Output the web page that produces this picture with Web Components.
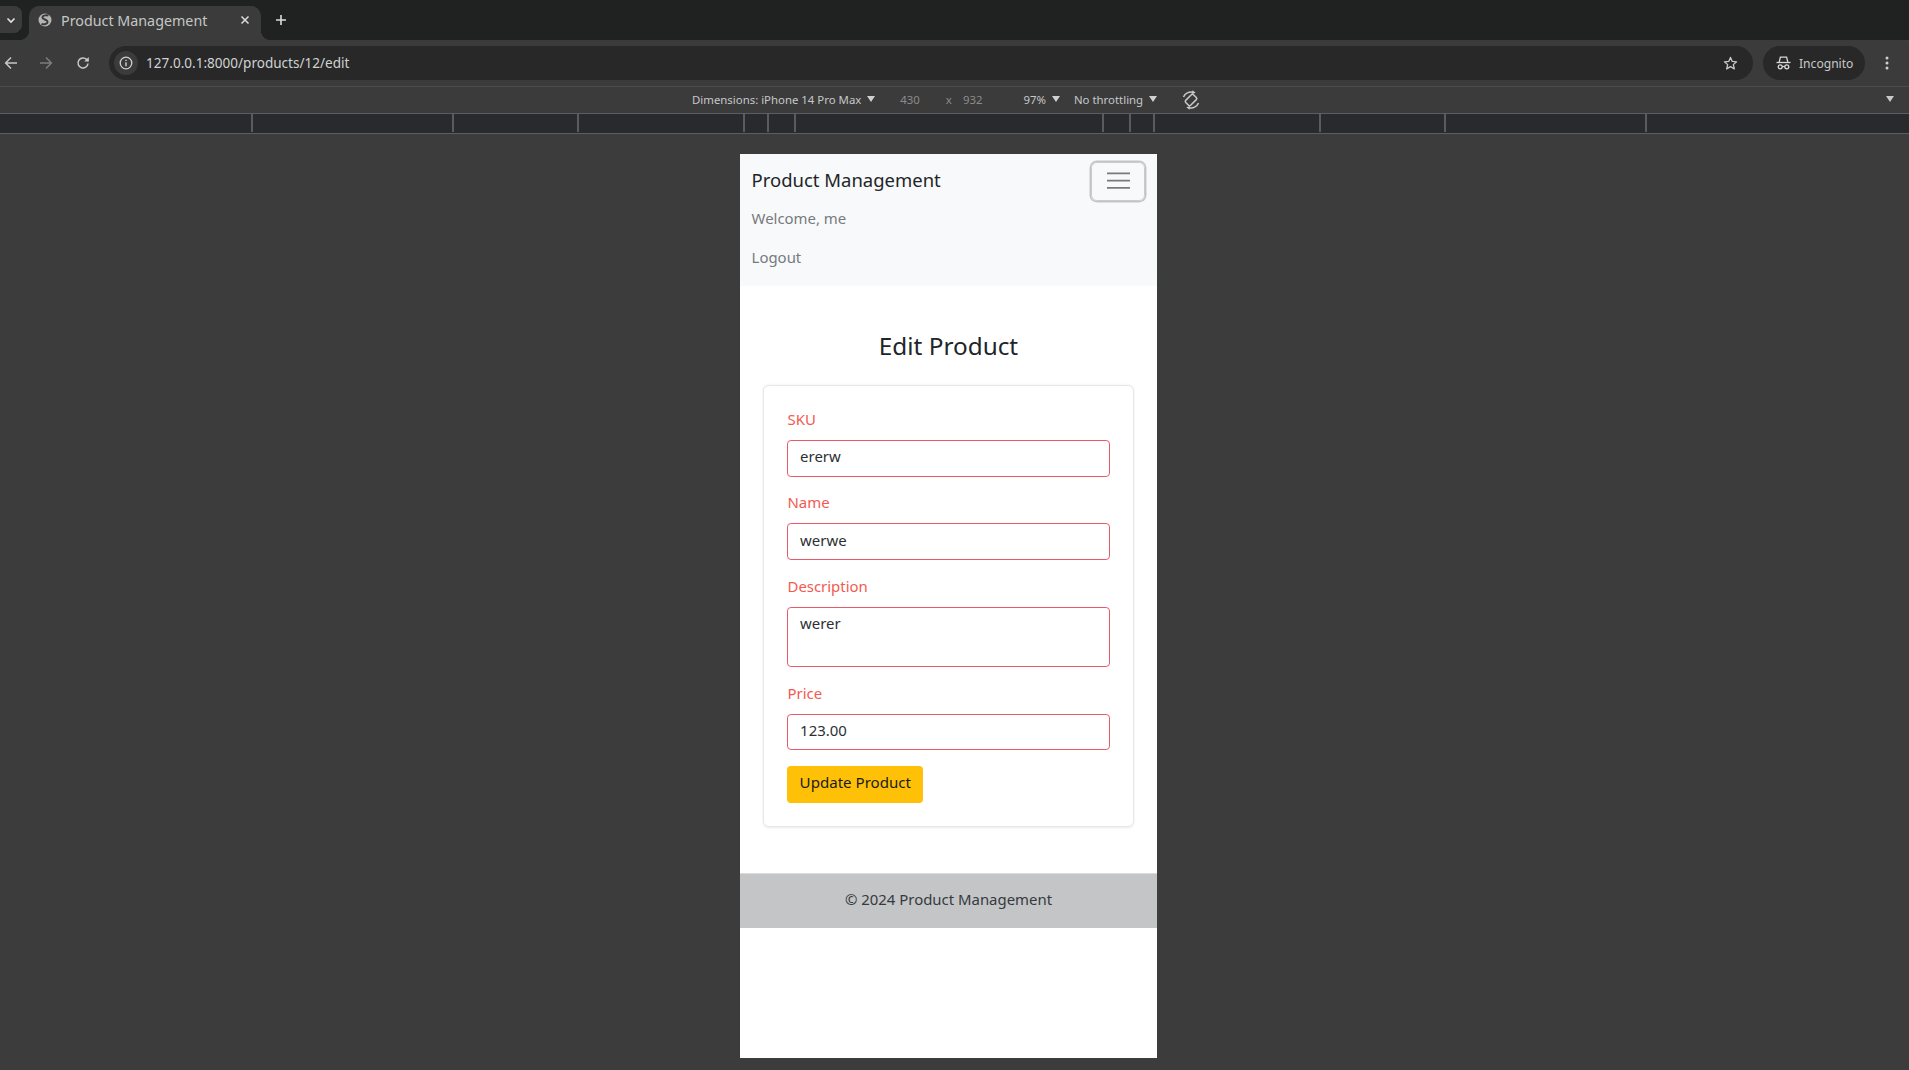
<!DOCTYPE html>
<html lang="en">
<head>
<meta charset="utf-8">
<title>Product Management</title>
<style>
  html, body { margin: 0; height: 100%; overflow: hidden; background: #3c3c3c; }
  body { font-family: "Noto Sans", "Open Sans", sans-serif; }
  :root { --ui-font: "Noto Sans", "Open Sans", sans-serif; }
</style>
</head>
<body>

<browser-window>
  <product-page>
    <app-navbar brand="Product Management">
      <span>Welcome, me</span>
      <span>Logout</span>
    </app-navbar>
    <edit-form title-text="Edit Product">
      <form-field label="SKU">ererw</form-field>
      <form-field label="Name">werwe</form-field>
      <form-field label="Description" multiline>werer</form-field>
      <form-field label="Price">123.00</form-field>
      <update-button>Update Product</update-button>
    </edit-form>
    <app-footer>© 2024 Product Management</app-footer>
  </product-page>
</browser-window>

<script>
// browser chrome
class TabStrip extends HTMLElement {
  constructor() {
    super();
    this.attachShadow({mode: 'open'}).innerHTML = `
      <style>
        :host { display: flex; height: 40px; background: #202222; align-items: flex-end; font-family: var(--ui-font); }
        .more { width: 22px; height: 27px; margin-bottom: 7px; background: #3b3b3b; border-radius: 0 8px 8px 0;
                display: flex; align-items: center; justify-content: center; }
        .tab { position: relative; width: 232px; height: 34px; margin-left: 7px; background: #3b3b3b; border-radius: 10px 10px 0 0;
               display: flex; align-items: center; box-sizing: border-box; padding: 0 11px 6px 9px; color: #c4c7c5; font-size: 14.3px; }
        .tab::before, .tab::after { content: ""; position: absolute; bottom: 0; width: 10px; height: 10px; }
        .tab::before { left: -10px; background: radial-gradient(circle at 0 0, #202222 10px, #3b3b3b 10.5px); }
        .tab::after { right: -10px; background: radial-gradient(circle at 100% 0, #202222 10px, #3b3b3b 10.5px); }
        .name { flex: 1; margin-left: 9px; white-space: nowrap; }
        .plus { margin: 0 0 7px 14px; height: 27px; display: flex; align-items: center; }
        svg { display: block; }
      </style>
      <div class="more"><svg width="12" height="12" viewBox="0 0 12 12"><path d="M2.5 4.5 6 8l3.5-3.5" fill="none" stroke="#e3e3e3" stroke-width="1.6"/></svg></div>
      <div class="tab">
        <svg width="14" height="14" viewBox="0 0 14 14"><circle cx="7" cy="7" r="6.5" fill="#b4b4b4"/><path d="M10.500 2.500C8.500 1.800 4.500 2.200 4.400 4.400 4.300 6.500 9.500 6.500 9.600 8.800 9.700 11 6 11.800 3.500 11" fill="none" stroke="#3b3b3b" stroke-width="2"/></svg>
        <span class="name">Product Management</span>
        <svg width="10" height="10" viewBox="0 0 10 10"><path d="M1.5 1.5l7 7m0-7l-7 7" stroke="#dcdcdc" stroke-width="1.5"/></svg>
      </div>
      <div class="plus"><svg width="12" height="12" viewBox="0 0 12 12"><path d="M6 1v10M1 6h10" stroke="#dcdcdc" stroke-width="1.6"/></svg></div>
    `;
  }
}

class AddressBar extends HTMLElement {
  constructor() {
    super();
    this.attachShadow({mode: 'open'}).innerHTML = `
      <style>
        :host { display: flex; align-items: center; height: 46px; background: #3b3b3b; border-radius: 0 10px 0 0; font-family: var(--ui-font); }
        .nav { display: flex; width: 109px; box-sizing: border-box; padding-left: 4px; gap: 21px; }
        .nav svg:nth-child(3) { margin-left: 2px; }
        .url { flex: 1; height: 34px; background: #282828; border-radius: 17px; display: flex; align-items: center; }
        .info { width: 24px; height: 24px; margin-left: 5px; background: #3b3b3b; border-radius: 50%; display: flex; align-items: center; justify-content: center; }
        .text { flex: 1; margin-left: 8px; color: #cfd2d3; font-size: 13.55px; white-space: nowrap; }
        .star { margin-right: 15px; }
        .pill { width: 102px; height: 34px; margin-left: 10px; background: #282828; border-radius: 17px; display: flex; align-items: center;
                box-sizing: border-box; padding-left: 13px; gap: 8px; color: #c8c8c8; font-size: 12.1px; }
        .menu { width: 44px; display: flex; justify-content: center; }
        svg { display: block; }
      </style>
      <div class="nav">
        <svg width="14" height="14" viewBox="0 0 14 14"><path d="M13 7H2M7 1.5 1.6 7 7 12.500" fill="none" stroke="#c8c8c8" stroke-width="1.500"/></svg>
        <svg width="14" height="14" viewBox="0 0 14 14"><path d="M1 7h11M7 1.500 12.400 7 7 12.500" fill="none" stroke="#7d7d7d" stroke-width="1.500"/></svg>
        <svg width="14" height="14" viewBox="0 0 14 14"><path d="M12 7.500A5 5 0 1 1 10.500 3.400L12.300 5" fill="none" stroke="#c8c8c8" stroke-width="1.500"/><path d="M12.800 1v4.600H8.200Z" fill="#c8c8c8"/></svg>
      </div>
      <div class="url">
        <div class="info"><svg width="14" height="14" viewBox="0 0 14 14"><circle cx="7" cy="7" r="5.800" fill="none" stroke="#d0d0d0" stroke-width="1.300"/><path d="M7 6.200v4M7 3.800v1.300" stroke="#d0d0d0" stroke-width="1.400"/></svg></div>
        <span class="text">127.0.0.1:8000/products/12/edit</span>
        <svg class="star" width="15" height="15" viewBox="0 0 16 16"><path d="M8 1.500l1.900 4.300 4.600.4-3.500 3 1.100 4.600L8 11.400l-4.100 2.400L5 9.200l-3.500-3 4.600-.4Z" fill="none" stroke="#c8c8c8" stroke-width="1.400" stroke-linejoin="round"/></svg>
      </div>
      <div class="pill">
        <svg width="15" height="14" viewBox="0 0 15 14"><path d="M0.500 6.500h14" stroke="#d8d8d8" stroke-width="1.300"/><path d="M3.200 6 4.400 1.200h6.200L11.800 6" fill="none" stroke="#d8d8d8" stroke-width="1.300"/><circle cx="4.200" cy="10.800" r="2" fill="none" stroke="#d8d8d8" stroke-width="1.300"/><circle cx="10.800" cy="10.800" r="2" fill="none" stroke="#d8d8d8" stroke-width="1.300"/><path d="M6.200 10.500h2.600" stroke="#d8d8d8" stroke-width="1.200"/></svg>
        <span>Incognito</span>
      </div>
      <div class="menu"><svg width="4" height="14" viewBox="0 0 4 14"><circle cx="2" cy="2" r="1.500" fill="#d0d0d0"/><circle cx="2" cy="7" r="1.500" fill="#d0d0d0"/><circle cx="2" cy="12" r="1.500" fill="#d0d0d0"/></svg></div>
    `;
  }
}

class DeviceBar extends HTMLElement {
  constructor() {
    super();
    const tri = (gap) => `<svg style="margin-left:${gap}px" width="8" height="6" viewBox="0 0 8 6"><path d="M0 0h8L4 6Z" fill="#d0d0d0"/></svg>`;
    this.attachShadow({mode: 'open'}).innerHTML = `
      <style>
        :host { display: flex; align-items: center; box-sizing: content-box; padding: 0 0 2px 692px; height: 24px; background: #3b3b3b;
                border-top: 1px solid #4b4b4b; font-family: var(--ui-font); font-size: 11.4px; color: #c6c8ca; white-space: nowrap; }
        .dim { color: #8b8b8b; }
        svg { display: block; flex: none; }
      </style>
      <span>Dimensions: iPhone 14 Pro Max</span>${tri(6)}
      <span class="dim" style="margin-left:25px">430</span>
      <span class="dim" style="margin-left:26px">x</span>
      <span class="dim" style="margin-left:11px">932</span>
      <span style="margin-left:41px">97%</span>${tri(6)}
      <span style="margin-left:14px">No throttling</span>${tri(6)}
      <svg style="margin-left:24px;position:relative;top:1px" width="20" height="20" viewBox="0 0 20 20"><g fill="none" stroke="#c8c8c8" stroke-width="1.500"><rect x="6.500" y="4.500" width="7" height="11" rx="1.500" transform="rotate(45 10 10)"/><path d="M2.500 7A8 8 0 0 1 12 2.300M17.500 13A8 8 0 0 1 8 17.700"/></g><path d="M11.500 .3l3.200 2.500-3.800 1.200ZM8.500 19.700l-3.200-2.500 3.800-1.200Z" fill="#c8c8c8"/></svg>
      <svg style="margin-left:auto;margin-right:15px" width="8" height="6" viewBox="0 0 8 6"><path d="M0 0h8L4 6Z" fill="#c8c8c8"/></svg>
    `;
  }
}

class DeviceRuler extends HTMLElement {
  constructor() {
    super();
    // segment widths of the media query bar, left to right
    const segs = [253, 201, 125, 166, 24, 27, 308, 27, 24, 166, 125, 201, 262];
    this.attachShadow({mode: 'open'}).innerHTML = `
      <style>
        :host { display: flex; height: 19px; background: #292a2d; border-top: 1px solid #5e5e5e; border-bottom: 1px solid #5e5e5e; }
        div { flex: none; box-sizing: border-box; border-right: 2px solid #5a5b5d; margin-bottom: 1px; }
        div:last-child { border: 0; flex: 1; }
      </style>
      ${segs.map(w => `<div style="width:${w}px"></div>`).join('')}
    `;
  }
}

class BrowserWindow extends HTMLElement {
  constructor() {
    super();
    this.attachShadow({mode: 'open'}).innerHTML = `
      <style>
        :host { display: flex; flex-direction: column; height: 100vh; background: #3c3c3c; }
        .stage { flex: 1; display: flex; justify-content: center; padding: 20px 12px 0 0; min-height: 0; }
      </style>
      <tab-strip></tab-strip>
      <address-bar></address-bar>
      <device-bar></device-bar>
      <device-ruler></device-ruler>
      <div class="stage"><slot></slot></div>
    `;
  }
}

// the emulated page, 430x932 at 97%
class ProductPage extends HTMLElement {
  constructor() {
    super();
    this.attachShadow({mode: 'open'}).innerHTML = `
      <style>
        :host { display: flex; flex-direction: column; flex: none; width: 430px; height: 932px; zoom: 0.97; background: #fff;
                font-family: var(--ui-font); font-size: 15.4px; line-height: 24px; color: #212529; }
      </style>
      <slot></slot>
    `;
  }
}

class AppNavbar extends HTMLElement {
  constructor() {
    super();
    const brand = this.getAttribute('brand');
    this.attachShadow({mode: 'open'}).innerHTML = `
      <style>
        :host { display: block; background: #f8f9fa; padding: 8px 12px; }
        .top { display: flex; justify-content: space-between; align-items: center; height: 40px; }
        .brand { font-size: 19.05px; color: #212529; margin-top: -4px; }
        .toggler { width: 56px; height: 40px; box-sizing: border-box; border: 1px solid #c9cacb; border-radius: 6px;
                   box-shadow: 0 0 0 1.500px #c4c5c6; display: flex; align-items: center; justify-content: center; }
        .links { display: flex; flex-direction: column; color: #777a7d; }
        ::slotted(span) { display: block; padding: 7px 0 9px; }
        svg { display: block; }
      </style>
      <div class="top">
        <span class="brand">${brand}</span>
        <div class="toggler"><svg width="24" height="18" viewBox="0 0 24 18"><path d="M0 1.500h24M0 9h24M0 16.500h24" stroke="#77797c" stroke-width="1.800"/></svg></div>
      </div>
      <div class="links"><slot></slot></div>
    `;
  }
}

class EditForm extends HTMLElement {
  constructor() {
    super();
    const title = this.getAttribute('title-text');
    this.attachShadow({mode: 'open'}).innerHTML = `
      <style>
        :host { display: block; padding: 48px 24px 47px; }
        h2 { margin: 0 0 24px; text-align: center; font-size: 25.1px; line-height: 29px; padding-bottom: 1px; font-weight: 400; color: #212529; }
        .card { border: 1px solid #e6e7e9; border-radius: 6px; padding: 24px; box-shadow: 0 1px 3px rgba(0,0,0,.08); background: #fff; }
      </style>
      <h2>${title}</h2>
      <div class="card"><slot></slot></div>
    `;
  }
}

class FormField extends HTMLElement {
  constructor() {
    super();
    const multi = this.hasAttribute('multiline');
    this.attachShadow({mode: 'open'}).innerHTML = `
      <style>
        :host { display: block; margin-bottom: 16px; }
        label { display: block; line-height: 21px; margin-bottom: 11px; color: #f25a50; }
        .box { box-sizing: border-box; height: ${multi ? 62 : 38}px; padding: 4.500px 12px; border: 1.300px solid #e8596a; border-radius: 4px; color: #2b3035; background: #fff; }
      </style>
      <label>${this.getAttribute('label')}</label>
      <div class="box" role="textbox"><slot></slot></div>
    `;
  }
}

class UpdateButton extends HTMLElement {
  constructor() {
    super();
    this.attachShadow({mode: 'open'}).innerHTML = `
      <style>
        :host { display: inline-flex; box-sizing: border-box; width: 139.500px; height: 38px; padding: 5px 0 7px 12.500px; background: #ffc107; border-radius: 4px; color: #1a1a1a; font-size: 15.55px; white-space: nowrap; }
      </style>
      <slot></slot>
    `;
  }
}

class AppFooter extends HTMLElement {
  constructor() {
    super();
    this.attachShadow({mode: 'open'}).innerHTML = `
      <style>
        :host { display: block; padding: 15px 16px 17px; text-align: center; background: #c4c5c7; border-top: 1px solid #dcdcdc; color: #343a40; }
      </style>
      <slot></slot>
    `;
  }
}

customElements.define('tab-strip', TabStrip);
customElements.define('address-bar', AddressBar);
customElements.define('device-bar', DeviceBar);
customElements.define('device-ruler', DeviceRuler);
customElements.define('browser-window', BrowserWindow);
customElements.define('product-page', ProductPage);
customElements.define('app-navbar', AppNavbar);
customElements.define('edit-form', EditForm);
customElements.define('form-field', FormField);
customElements.define('update-button', UpdateButton);
customElements.define('app-footer', AppFooter);
</script>
</body>
</html>
